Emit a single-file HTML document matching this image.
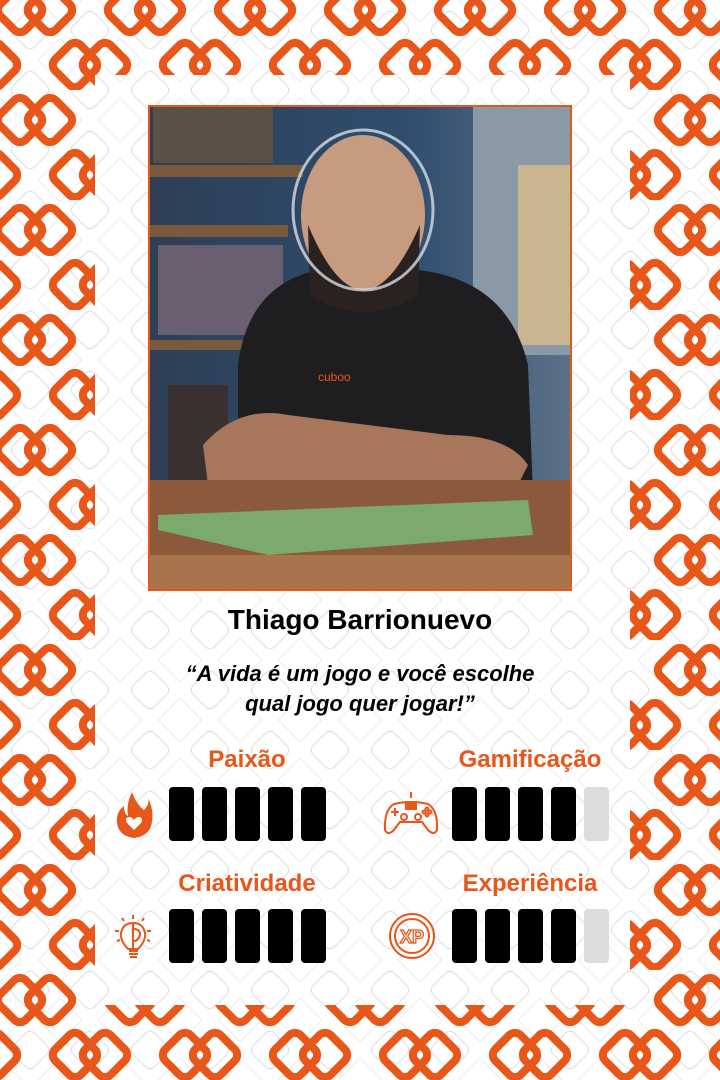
<!DOCTYPE html>
<html><head><meta charset="utf-8"><style>
*{margin:0;padding:0;box-sizing:border-box}
body{width:720px;height:1080px;position:relative;overflow:hidden;background:#fff;font-family:"Liberation Sans",Arial,sans-serif}
.abs{position:absolute}
.name{left:0;width:720px;top:604px;text-align:center;font-weight:bold;font-size:28px;color:#000}
.quote{left:0;width:720px;top:659px;text-align:center;font-weight:bold;font-style:italic;font-size:22px;line-height:30px;color:#000}
.lbl{font-weight:bold;font-size:24px;color:#e8561a;text-align:center;width:240px}
.bar{width:25px;height:54px;border-radius:4px;background:#000;position:absolute}
.bar.g{background:#dcdcdc}
</style></head><body>
<svg class="abs" style="left:0;top:0" width="720" height="1080">
<defs>
<pattern id="bg" width="60" height="60" patternUnits="userSpaceOnUse">
<rect x="15" y="15" width="30" height="30" rx="6" transform="rotate(45 30 30)" fill="none" stroke="#e2e2e2" stroke-width="1.2"/>
<rect x="3" y="3" width="54" height="54" rx="8" transform="rotate(45 30 30)" fill="none" stroke="#ececec" stroke-width="1"/>
</pattern>
<pattern id="chain" width="110" height="110" patternUnits="userSpaceOnUse" patternTransform="translate(-10 -20)">
<g fill="none" stroke="#e8561a" stroke-width="8">
<rect x="12" y="12" width="36" height="36" rx="8" transform="rotate(45 30 30)"/>
<rect x="42" y="12" width="36" height="36" rx="8" transform="rotate(45 60 30)"/>
<rect x="-43" y="67" width="36" height="36" rx="8" transform="rotate(45 -25 85)"/>
<rect x="-13" y="67" width="36" height="36" rx="8" transform="rotate(45 5 85)"/>
<rect x="67" y="67" width="36" height="36" rx="8" transform="rotate(45 85 85)"/>
<rect x="97" y="67" width="36" height="36" rx="8" transform="rotate(45 115 85)"/>
</g>
</pattern>
</defs>
<rect width="720" height="1080" fill="url(#bg)"/>
<rect x="0" y="0" width="95" height="1080" fill="url(#chain)"/>
<rect x="630" y="0" width="90" height="1080" fill="url(#chain)"/>
<rect x="0" y="0" width="720" height="75" fill="url(#chain)"/>
<rect x="0" y="1005" width="720" height="75" fill="url(#chain)"/>
</svg>

<svg class="abs" style="left:148px;top:105px" width="424" height="486">
<defs>
<linearGradient id="wall" x1="0" x2="1"><stop offset="0" stop-color="#2e3f55"/><stop offset=".6" stop-color="#2f4c6e"/><stop offset="1" stop-color="#5d7287"/></linearGradient>
</defs>
<rect width="424" height="486" fill="url(#wall)"/>
<rect x="325" y="0" width="99" height="250" fill="#8a99a6"/>
<rect x="370" y="60" width="54" height="180" fill="#c9b58f"/>
<rect x="0" y="60" width="155" height="12" fill="#7a5a3d"/>
<rect x="0" y="120" width="140" height="12" fill="#7a5a3d"/>
<rect x="0" y="235" width="100" height="10" fill="#7a5a3d"/>
<rect x="5" y="0" width="120" height="58" fill="#5a5046"/>
<rect x="10" y="140" width="125" height="90" fill="#6a5f70"/>
<rect x="20" y="280" width="60" height="100" fill="#3a3030"/>
<path d="M90 260 Q100 180 170 165 L270 165 Q360 175 380 260 L385 390 L90 390 Z" fill="#1e1e20"/>
<path d="M55 340 Q90 300 140 310 L300 330 Q360 330 380 360 L370 380 L60 380 Z" fill="#a8765a"/>
<ellipse cx="215" cy="110" rx="62" ry="80" fill="#c69b80"/>
<path d="M160 120 Q215 250 272 120 L270 190 Q215 225 162 190 Z" fill="#2a2220"/>
<ellipse cx="215" cy="105" rx="70" ry="80" fill="none" stroke="#d6dde3" stroke-width="3" opacity=".8"/>
<rect x="0" y="375" width="424" height="111" fill="#8a5a3a"/>
<path d="M10 410 L380 395 L385 430 L120 450 L10 425 Z" fill="#7caa6a"/>
<rect x="0" y="450" width="424" height="36" fill="#a8744e"/>
<text x="170" y="276" font-family="Liberation Sans" font-size="12" fill="#e8561a">cuboo</text>
</svg>
<div class="abs" style="left:148px;top:105px;width:424px;height:486px;border:2px solid #e8561a"></div>

<div class="abs name">Thiago Barrionuevo</div>
<div class="abs quote">“A vida é um jogo e você escolhe<br>qual jogo quer jogar!”</div>

<div class="abs lbl" style="left:127px;top:746px">Paixão</div>
<div class="abs lbl" style="left:410px;top:746px">Gamificação</div>
<div class="abs lbl" style="left:127px;top:870px">Criatividade</div>
<div class="abs lbl" style="left:410px;top:870px">Experiência</div>

<div class="bar" style="left:169px;top:787px"></div><div class="bar" style="left:202px;top:787px"></div><div class="bar" style="left:235px;top:787px"></div><div class="bar" style="left:268px;top:787px"></div><div class="bar" style="left:301px;top:787px"></div>
<div class="bar" style="left:452px;top:787px"></div><div class="bar" style="left:485px;top:787px"></div><div class="bar" style="left:518px;top:787px"></div><div class="bar" style="left:551px;top:787px"></div><div class="bar g" style="left:584px;top:787px"></div>
<div class="bar" style="left:169px;top:909px"></div><div class="bar" style="left:202px;top:909px"></div><div class="bar" style="left:235px;top:909px"></div><div class="bar" style="left:268px;top:909px"></div><div class="bar" style="left:301px;top:909px"></div>
<div class="bar" style="left:452px;top:909px"></div><div class="bar" style="left:485px;top:909px"></div><div class="bar" style="left:518px;top:909px"></div><div class="bar" style="left:551px;top:909px"></div><div class="bar g" style="left:584px;top:909px"></div>

<svg class="abs" style="left:114px;top:790px" width="40" height="50" viewBox="0 0 40 50">
<path d="M18 2 Q22 14 30 20 Q36 14 34 8 Q40 20 38 32 Q36 46 20 48 Q4 46 3 32 Q2 22 10 16 Q10 24 14 26 Q12 14 18 2Z" fill="#e8561a"/>
<path d="M20 40 L13 33 Q10 28 15 27 Q18 27 20 30 Q22 27 25 27 Q30 28 27 33Z" fill="#fff"/>
</svg>
<svg class="abs" style="left:382px;top:790px" width="58" height="48" viewBox="0 0 58 48" fill="none" stroke="#e8561a" stroke-width="2">
<line x1="29" y1="2" x2="29" y2="8"/><rect x="24" y="12" width="10" height="7" fill="#e8561a"/>
<path d="M12 14 Q29 10 46 14 Q56 20 55 40 Q52 46 46 40 L40 32 L18 32 L12 40 Q6 46 3 40 Q2 20 12 14Z"/>
<circle cx="22" cy="27" r="3"/><circle cx="36" cy="27" r="3"/><path d="M9 22h8M13 18v8"/><circle cx="45" cy="19" r="1.5"/><circle cx="45" cy="25" r="1.5"/><circle cx="42" cy="22" r="1.5"/><circle cx="48" cy="22" r="1.5"/>
</svg>
<svg class="abs" style="left:112px;top:913px" width="44" height="48" viewBox="0 0 44 48" fill="none" stroke="#e8561a" stroke-width="2">
<path d="M16 36 Q8 28 9 20 Q11 10 21 10 Q31 10 33 20 Q34 28 26 36Z"/><path d="M21 10 V36"/><path d="M22 16 Q28 16 28 22 Q26 28 22 28"/>
<path d="M17 38h9M17 41h9M18 44h7"/><path d="M21 2v4M10 5l2 3M32 5l-2 3M3 18h4M35 18h4M5 28l3-1M38 28l-3-1"/>
</svg>
<svg class="abs" style="left:388px;top:912px" width="48" height="48" viewBox="0 0 48 48" fill="none" stroke="#e8561a" stroke-width="2">
<circle cx="24" cy="24" r="22"/><circle cx="24" cy="24" r="17"/>
<text x="24" y="31" text-anchor="middle" font-family="Liberation Sans" font-weight="bold" font-size="18" fill="#fff" stroke="#e8561a" stroke-width="1.3">XP</text>
</svg>
</body></html>
